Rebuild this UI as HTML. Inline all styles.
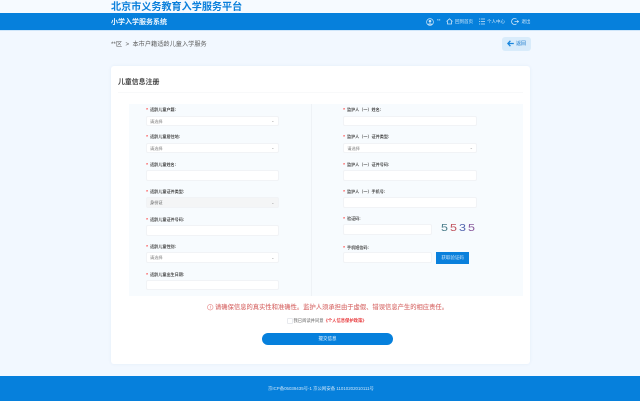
<!DOCTYPE html>
<html lang="zh"><head><meta charset="utf-8">
<style>
html,body{margin:0;padding:0}
body{width:640px;height:401px;overflow:hidden;position:relative;background:#f2f8ff;font-family:"Liberation Sans","Noto Sans CJK SC",sans-serif}
div,span,svg{position:absolute;white-space:nowrap;box-sizing:border-box}
#w{left:0;top:0;width:640px;height:401px;filter:blur(.3px)}
.l{font-size:4.1px;line-height:6px;color:#4a4a4a;font-weight:700;margin-top:.7px}
.l b{display:inline-block;width:3.8px;color:#f22;font-weight:700}
.i{background:#fff;border:1px solid #f1f3f6;border-radius:2px;height:10.8px}
.s{font-size:4.2px;line-height:9px;color:#777;padding-left:3px}
.a{right:3px;top:1.5px;font-size:4px;color:#999;line-height:6px}
.n{color:#d5e9fa;font-size:4.5px;line-height:6px;top:18.8px}
.c{top:222px;font-size:10px;line-height:14px;transform:scaleX(1.25);transform-origin:0 0}
</style></head><body><div id="w">
<div style="left:0;top:0;width:640px;height:13px;background:#f6faff"></div>
<div style="left:111px;top:.5px;font-size:10.1px;line-height:14px;font-weight:700;color:#0a7fdb">北京市义务教育入学服务平台</div>
<div style="left:0;top:13px;width:640px;height:17.5px;background:#0680dc;border-bottom:.5px solid #cfe6fa"></div>
<div style="left:111px;top:16.5px;font-size:7px;line-height:12px;font-weight:700;color:#e9f4fd">小学入学服务系统</div>

<svg style="left:426px;top:18px" width="8" height="8" viewBox="0 0 8 8" fill="none"><circle cx="4" cy="4" r="3.4" stroke="#cfe5f8" stroke-width=".7"/><circle cx="4" cy="3.2" r="1.3" fill="#cfe5f8"/><path d="M1.8 6.6C2.2 5 5.8 5 6.2 6.6" fill="#cfe5f8"/></svg>
<div class="n" style="left:437px;top:18px">**</div>
<svg style="left:446px;top:18px" width="7" height="7" viewBox="0 0 7 7" fill="none" stroke="#cfe5f8" stroke-width=".8"><path d="M.5 3.5 3.5 .8 6.5 3.5M1.5 3.2V6H5.5V3.2"/></svg>
<div class="n" style="left:455px">回到首页</div>
<svg style="left:479px;top:18px" width="6" height="7" viewBox="0 0 6 7" fill="none" stroke="#cfe5f8" stroke-width=".7"><path d="M0 1H1.2M2 1H6M0 3.5H1.2M2 3.5H6M0 6H1.2M2 6H6"/></svg>
<div class="n" style="left:487px">个人中心</div>
<svg style="left:511px;top:18px" width="8" height="7" viewBox="0 0 8 7" fill="none" stroke="#cfe5f8" stroke-width=".8"><path d="M5.5 1.2A3 3 0 1 0 5.5 5.8M3.5 3.5H7.5M6.2 2.4 7.5 3.5 6.2 4.6"/></svg>
<div class="n" style="left:521.5px">退出</div>

<div style="left:111px;top:39.5px;font-size:6.2px;line-height:9px;color:#5c5c5c">**区 &nbsp;&gt;&nbsp; 本市户籍适龄儿童入学服务</div>
<div style="left:502px;top:36.5px;width:29px;height:14px;background:#d9ecfb;border-radius:3px"></div>
<svg style="left:507px;top:40px" width="7" height="7" viewBox="0 0 7 7" fill="none" stroke="#1a86dd" stroke-width="1.3"><path d="M3.4 .8.9 3.5 3.4 6.2M1 3.5H6.8"/></svg>
<div style="left:516px;top:40.5px;font-size:5px;line-height:6px;color:#5aa0dc;font-weight:700">返回</div>

<div style="left:111px;top:66px;width:419px;height:298px;background:#fff;border-radius:3px;box-shadow:0 0 3px rgba(120,160,200,.12)"></div>
<div style="left:118px;top:77.5px;font-size:6.9px;line-height:10px;font-weight:700;color:#444">儿童信息注册</div>
<div style="left:118px;top:91.5px;width:405px;height:1px;background:#f8f9fa"></div>
<div style="left:129px;top:104px;width:394px;height:192px;background:#f7fbfe"></div>
<div style="left:311px;top:104px;width:.6px;height:192px;background:#eef2f6"></div>

<div class="l" style="left:146.3px;top:106.3px"><b>*</b>适龄儿童户籍:</div>
<div class="i s" style="left:146px;top:115.6px;width:132.5px">请选择<span class="a">⌄</span></div>
<div class="l" style="left:146.3px;top:133.6px"><b>*</b>适龄儿童居住地:</div>
<div class="i s" style="left:146px;top:142.7px;width:132.5px">请选择<span class="a">⌄</span></div>
<div class="l" style="left:146.3px;top:161px"><b>*</b>适龄儿童姓名:</div>
<div class="i" style="left:146px;top:170.2px;width:132.5px"></div>
<div class="l" style="left:146.3px;top:188.3px"><b>*</b>适龄儿童证件类型:</div>
<div class="i s" style="left:146px;top:197.4px;width:132.5px;background:#f4f5f6;color:#555">身份证<span class="a">⌄</span></div>
<div class="l" style="left:146.3px;top:216.3px"><b>*</b>适龄儿童证件号码:</div>
<div class="i" style="left:146px;top:225.2px;width:132.5px"></div>
<div class="l" style="left:146.3px;top:243.6px"><b>*</b>适龄儿童性别:</div>
<div class="i s" style="left:146px;top:252.4px;width:132.5px">请选择<span class="a">⌄</span></div>
<div class="l" style="left:146.3px;top:271px"><b>*</b>适龄儿童出生日期:</div>
<div class="i" style="left:146px;top:279.7px;width:132.5px"></div>

<div class="l" style="left:343.2px;top:106.3px"><b>*</b>监护人（一）姓名:</div>
<div class="i" style="left:343.3px;top:115.6px;width:133.7px"></div>
<div class="l" style="left:343.2px;top:133.6px"><b>*</b>监护人（一）证件类型:</div>
<div class="i s" style="left:343.3px;top:142.7px;width:133.7px">请选择<span class="a">⌄</span></div>
<div class="l" style="left:343.2px;top:161px"><b>*</b>监护人（一）证件号码:</div>
<div class="i" style="left:343.3px;top:170.2px;width:133.7px"></div>
<div class="l" style="left:343.2px;top:188.3px"><b>*</b>监护人（一）手机号:</div>
<div class="i" style="left:343.3px;top:197.4px;width:133.7px"></div>
<div class="l" style="left:343.2px;top:215.7px"><b>*</b>验证码:</div>
<div class="i" style="left:343.3px;top:224px;width:89px"></div>
<span class="c" style="left:441px;color:#4d7f8c">5</span><span class="c" style="left:450px;color:#c2555f">5</span><span class="c" style="left:459px;color:#5567b0">3</span><span class="c" style="left:467.5px;color:#8a5a9c">5</span>
<div class="l" style="left:343.2px;top:244px"><b>*</b>手机短信码:</div>
<div class="i" style="left:343.3px;top:252.3px;width:89px"></div>
<div style="left:435.8px;top:252px;width:33.7px;height:11.5px;background:#0a80dc;color:#cfe6fa;font-size:4.5px;line-height:11.5px;text-align:center">获取验证码</div>

<svg style="left:207px;top:304px" width="6.5" height="6.5" viewBox="0 0 7 7" fill="none" stroke="#e58080" stroke-width=".6"><circle cx="3.5" cy="3.5" r="3"/><path d="M3.5 1.8V4.2M3.5 4.8V5.4"/></svg>
<div style="left:215px;top:302.5px;font-size:6.3px;line-height:10px;color:#d9706f;font-weight:500">请确保信息的真实性和准确性。监护人须承担由于虚假、错误信息产生的相应责任。</div>
<div style="left:286.5px;top:317.5px;width:6px;height:6px;background:#fff;border:.6px solid #e8eaee;border-radius:1px"></div>
<div style="left:293.5px;top:317.5px;font-size:4.3px;line-height:6px;color:#666">我已阅读并同意<span style="position:static;color:#e8383b;font-weight:700">《个人信息保护政策》</span></div>
<div style="left:262px;top:333px;width:131px;height:12px;background:#0680dc;border-radius:6px;color:#d8ebfb;font-size:4.5px;line-height:12px;text-align:center;font-weight:500">提交信息</div>

<div style="left:0;top:376px;width:640px;height:25px;background:#0680dc"></div>
<div style="left:268px;top:385.5px;font-size:4.4px;line-height:6px;color:#cfe5f8">京ICP备05039435号-1 京公网安备 11010202010111号</div>
</div></body></html>
